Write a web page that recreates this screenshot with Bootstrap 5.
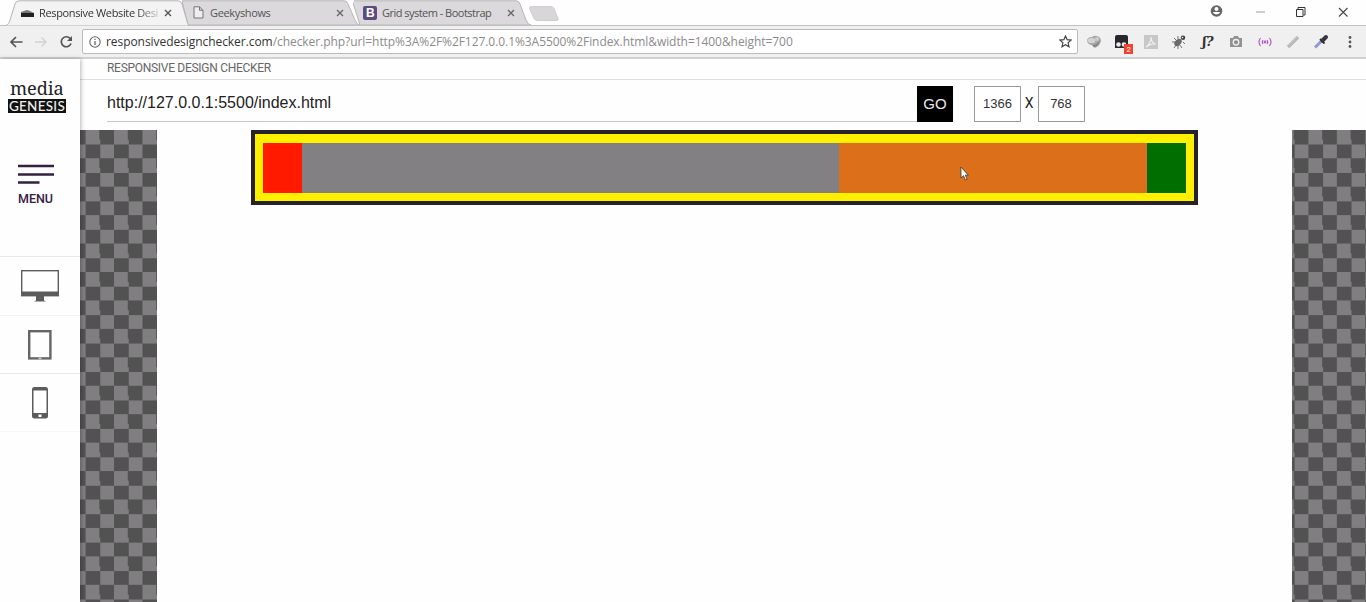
<!DOCTYPE html>
<html lang="en">
<head>
<meta charset="utf-8">
<meta name="viewport" content="width=device-width, initial-scale=1">
<title>Responsive Website Design Checker</title>
<link href="https://cdn.jsdelivr.net/npm/bootstrap@5.3.0/dist/css/bootstrap.min.css" rel="stylesheet">
<style>
body{font-family:"Liberation Sans",Arial,sans-serif;background:#fefefe;color:#222}
svg{display:block;flex:none}
.ui-font{font-family:"Open Sans","Noto Sans",sans-serif}
/* browser frame */
.tabstrip{height:25px;background:#fefefe}
.tab{height:25px;font-size:11px;color:#555;line-height:25px;white-space:nowrap}
.tab .shape{position:absolute;left:0;top:0}
.tab-label,.tab-fav,.tab-x{position:relative}
.tab-label{flex:none}
.tab1{width:184px;margin-left:5px;padding-left:15px;color:#333;z-index:2}
.tab2{width:178px;margin-left:-7px;padding-left:11px;z-index:1}
.tab3{width:178px;margin-left:-7px;padding-left:10px}
.tab1 .tab-label{width:125px;margin-left:4px;-webkit-mask-image:linear-gradient(90deg,#000 78%,rgba(0,0,0,.25) 94%);mask-image:linear-gradient(90deg,#000 78%,rgba(0,0,0,.25) 94%);letter-spacing:-.35px}
.tab2 .tab-label{width:126px;margin-left:6px;letter-spacing:-.35px}
.tab3 .tab-label{width:125px;margin-left:5px;letter-spacing:-.5px}
.tab3 .tab-label{letter-spacing:-.52px}
.newtab{margin-left:-2px;margin-top:6px}
.win{margin-left:auto}
.toolbar{height:34px;background:#f1f0f1;border-top:1px solid #c2c1c2;border-bottom:2px solid #d2d1d2}
.tool-nav{width:82px;padding-left:9px}
.address{width:996px;height:25px;background:#fff;border:1px solid #bcbbbc;border-radius:2px;font-size:12px;color:#8c8a8c;padding:0 5px 0 6px}
.address b{font-weight:400;color:#333}
.address-text{margin-left:5px;letter-spacing:-.06px}
.ext{width:28.4px}
.fx{display:block;font:italic 600 13px/18px "DejaVu Serif","Liberation Serif",serif;color:#333;letter-spacing:-.5px}
/* checker site */
.site{height:543px}
.side{width:80px;background:#fefefe;z-index:2;box-shadow:1px 0 4px rgba(0,0,0,.28)}
.brand{height:83px;padding:20px 0 0 8px}
.brand-top{font-family:"Noto Serif","Liberation Serif",serif;font-size:18.2px;line-height:19px;height:20px;color:#222;width:58px;padding-left:2px;white-space:nowrap;letter-spacing:-.1px}
.brand-bot{width:58px;height:13.500px;background:#111;color:#eee;font-family:Lato,sans-serif;font-size:13.5px;line-height:14px;text-align:center;font-weight:500;letter-spacing:.25px}
.menu{height:114px;padding:22px 0 0 18px;color:#36203f}
.menu span{display:block;font:500 12.5px/16px Roboto,sans-serif;margin-top:6px;letter-spacing:-.05px}
.device{height:58.7px;border-top:1px solid #e9e8ea}
.device:nth-of-type(4){border-top-color:#f3f2f4}
.device:last-child{border-bottom:1px solid #f7f7f8}
.topline{height:21px;border-bottom:1px solid #dedede;padding-left:27px;font:400 12px/19px Roboto,sans-serif;color:#666;letter-spacing:-.29px}
.controls{height:50px;padding:6px 0 0 27px}
.url-field{width:810px;height:36px;border-bottom:1px solid #c9c8c9;font-size:16px;line-height:34px;color:#222}
.go{width:36px;height:36px;background:#000;color:#e8e8e8;font-size:15px;line-height:34px;border-radius:0;padding:0;border:0;margin-right:21px}
.dim{width:47px;height:36px;border:1px solid #9a999a;font-size:13px;line-height:34px;color:#333;background:#fff}
.times{width:16.500px;font:400 14px/35px Roboto,sans-serif}
.stage{padding:0 74px 0 76.5px;background:repeating-conic-gradient(#535253 0 25%,#807e80 0 50%) 5.6px -.2px/28.44px 28.44px}
.viewport-box{background:#fefefe;padding-left:94.5px}
.frame{width:947px;height:75px;border:4px solid #25222a;background:#fff000;padding:8.5px 8px 8px}
.c1,.c4{width:38.7px}.c2{width:537.5px}
.c1{background:#ff1a00}.c2{background:#828082}.c3{background:#dc6f1a}.c4{background:#006e00}
.cursor{position:absolute;left:960px;top:166px;z-index:5}
</style>
</head>
<body class="overflow-hidden position-relative">
<header class="ui-font">
  <div class="tabstrip d-flex align-items-start">
    <div class="tab tab1 d-flex align-items-center position-relative">
      <svg class="shape" width="184" height="26"><path d="M0 26C4 24 4 23 5 20L10 4Q11 .8 14 .8H173Q176 .8 177 4L182 21Q183 25 184 26Z" fill="#f4f3f4" stroke="#b6b5b6"/></svg>
      <svg class="tab-fav" width="15" height="12"><path d="M1 5l3-1 3-1 3 1 4 2v4H1z" fill="#777"/><path d="M1 6h13v4H1z" fill="#222"/></svg>
      <span class="tab-label">Responsive Website Desi</span>
      <svg class="tab-x" width="8" height="8"><path d="M1 1l6 6M7 1L1 7" stroke="#555" stroke-width="1.4"/></svg>
    </div>
    <div class="tab tab2 d-flex align-items-center position-relative">
      <svg class="shape" width="178" height="25"><path d="M0 .8H162Q165 .8 166 4L173 20Q175 25 178 25H6Z" fill="#dbd9db" stroke="#b6b5b6"/></svg>
      <svg class="tab-fav" width="11" height="13"><path d="M1 .8h5.5L10 4.3V12H1zM6.5.8v3.5H10" fill="#eee" stroke="#777"/></svg>
      <span class="tab-label">Geekyshows</span>
      <svg class="tab-x" width="8" height="8"><path d="M1 1l6 6M7 1L1 7" stroke="#666" stroke-width="1.3"/></svg>
    </div>
    <div class="tab tab3 d-flex align-items-center position-relative">
      <svg class="shape" width="178" height="25"><path d="M1 .8H163Q166 .8 167 4L173 20Q175 25 178 25H7L0 3" fill="#dbd9db" stroke="#b6b5b6"/></svg>
      <svg class="tab-fav" width="14" height="14"><rect width="14" height="14" rx="2" fill="#5c4b80"/><text x="3" y="11.2" font-family="Liberation Sans" font-weight="700" font-size="12" fill="#fff" letter-spacing="0">B</text></svg>
      <span class="tab-label">Grid system - Bootstrap</span>
      <svg class="tab-x" width="8" height="8"><path d="M1 1l6 6M7 1L1 7" stroke="#666" stroke-width="1.3"/></svg>
    </div>
    <svg class="newtab" width="31" height="15"><path d="M2 .5h20q2 0 3 2l4 10q1 2-2 2H8q-2 0-3-2L.8 3Q0 .5 2 .5z" fill="#d8d6d8" stroke="#cfcecf"/></svg>
    <svg class="win" width="160" height="25"><circle cx="10.5" cy="11" r="5.8" fill="#666"/><circle cx="10.5" cy="9" r="2" fill="#fff"/><path d="M6.8 12h7.4q-.6 2.4-3.7 2.5-3.1-.1-3.7-2.5z" fill="#fff"/><path d="M50 12h9" stroke="#999"/><path d="M90.500 9.500h6.500v7h-6.500zM92 9V7.500h7V15h-1.500" fill="none" stroke="#333"/><path d="M133 8l8.500 8.500M141.500 8L133 16.500" stroke="#444" stroke-width="1.1"/></svg>
  </div>
  <div class="toolbar d-flex align-items-center">
    <div class="tool-nav d-flex align-items-center">
      <svg width="72" height="16" fill="none"><path d="M13.500 8H2M7 3L2 8l5 5" stroke="#555" stroke-width="1.7"/><path d="M26 8h11M32.500 3.500L37 8l-4.500 4.500" stroke="#d3d2d3" stroke-width="1.4"/><path d="M61.500 5A5 5 0 1 0 62 9.500" stroke="#555" stroke-width="1.7"/><path d="M63 2v5h-5z" fill="#555"/></svg>
    </div>
    <div class="address d-flex align-items-center">
      <svg width="12" height="12"><circle cx="6" cy="6" r="5.200" fill="none" stroke="#666" stroke-width="1.100"/><path d="M6 5v4M6 2.700v1.300" stroke="#666" stroke-width="1.300"/></svg>
      <span class="address-text text-nowrap"><b>responsivedesignchecker.com</b>/checker.php?url=http%3A%2F%2F127.0.0.1%3A5500%2Findex.html&amp;width=1400&amp;height=700</span>
      <svg class="ms-auto" width="13" height="13"><path d="M6.500 1l1.600 3.700 4 .4-3 2.700.9 4-3.500-2.100L3 11.800l.9-4-3-2.700 4-.4z" fill="none" stroke="#444" stroke-width="1.200"/></svg>
    </div>
    <div class="d-flex align-items-center" style="margin-left:2px">
      <div class="ext d-flex justify-content-center"><svg width="16" height="16"><path d="M1 7q0-4 5-4 2-2 5-1 4 1 4 5-1 5-6 7-2-1-3-3-4 0-5-4z" fill="#aaa9aa"/><ellipse cx="5.500" cy="6.500" rx="4" ry="2.600" fill="#d4d3d4"/><circle cx="11" cy="5" r="2" fill="#cccbcc"/><path d="M6 11q5 0 8-5-1 6-6 7z" fill="#858485"/></svg></div>
      <div class="ext d-flex justify-content-center"><svg width="21" height="24"><path d="M3 7q0-2 2-2h9q2 0 2 2v11H3z" fill="#29272c"/><circle cx="6.500" cy="14.500" r="2.300" fill="#eee"/><circle cx="12" cy="14.500" r="2.300" fill="#eee"/><rect x="12" y="14" width="9.500" height="10" fill="#f0432f"/><text x="14.500" y="22" font-size="8" font-family="Liberation Sans" fill="#fff">2</text></svg></div>
      <div class="ext d-flex justify-content-center"><svg width="14" height="14"><rect width="14" height="14" fill="#c8c7c8"/><path d="M2 12q5-4 5-10 0 6 5 7-5-1-10 3z" fill="none" stroke="#eee" stroke-width="1.200"/></svg></div>
      <div class="ext d-flex justify-content-center"><svg width="16" height="16"><path d="M3 4l3 3M7 2v4M12 8l2 2M8 10l3 4M1 8h5M3 14l3-4M7 11v4" stroke="#777"/><ellipse cx="7" cy="8.500" rx="4.200" ry="2.800" transform="rotate(-40 7 8.500)" fill="#6b6a6b"/><circle cx="12" cy="3.800" r="2.300" fill="#444"/><circle cx="11.500" cy="3.500" r=".8" fill="#eee"/></svg></div>
      <div class="ext text-center"><span class="fx">ʃ?</span></div>
      <div class="ext d-flex justify-content-center"><svg width="14" height="13"><path d="M1 3h3l1-2h4l1 2h3v9H1z" fill="#929192"/><circle cx="7" cy="7.300" r="2.800" fill="#929192" stroke="#f1f0f1" stroke-width="1.300"/></svg></div>
      <div class="ext d-flex justify-content-center"><svg width="14" height="12" fill="none" stroke="#b35bc6" stroke-width="1.200"><path d="M2.500 2q-3 4 0 8M5 4q-1.500 2 0 4M9 4q1.500 2 0 4M11.500 2q3 4 0 8"/><circle cx="7" cy="6" r=".8" fill="#b35bc6"/></svg></div>
      <div class="ext d-flex justify-content-center"><svg width="16" height="16"><path d="M3 13L13 3" stroke="#b8b7b8" stroke-width="3.500"/><path d="M3 11.500L12 2.500" stroke="#d6d5d6"/></svg></div>
      <div class="ext d-flex justify-content-center"><svg width="16" height="16"><path d="M2 13.500l7-7" stroke="#8f98d8" stroke-width="3"/><path d="M7 5l4.500 4.500" stroke="#333" stroke-width="2"/><path d="M9.500 6.500L13 3" stroke="#38343f" stroke-width="4" stroke-linecap="round"/></svg></div>
      <div class="ext d-flex justify-content-center"><svg width="4" height="14" fill="#555"><circle cx="2" cy="2.500" r="1.400"/><circle cx="2" cy="7" r="1.400"/><circle cx="2" cy="11.500" r="1.400"/></svg></div>
    </div>
  </div>
</header>
<div class="site d-flex">
  <aside class="side flex-shrink-0">
    <div class="brand">
      <div class="brand-top">media</div>
      <div class="brand-bot">GENESIS</div>
    </div>
    <div class="menu">
      <svg width="36" height="21"><path d="M0 2h36M0 10.500h36M0 18.500h21.500" stroke="#36203f" stroke-width="2.600"/></svg>
      <span>MENU</span>
    </div>
    <div class="device d-flex justify-content-center align-items-center"><svg width="38" height="32"><rect x=".7" y=".7" width="36.600" height="25" fill="#fefefe" stroke="#5d5c5d" stroke-width="1.400"/><path d="M0 21.500h38V26H23v4.500l2 1H13l2-1V26H0z" fill="#5d5c5d"/></svg></div>
    <div class="device d-flex justify-content-center align-items-center"><svg width="24" height="30"><rect x="1.200" y="1.200" width="21.200" height="27.200" fill="none" stroke="#666566" stroke-width="2.400"/><path d="M10.500 28.400h3" stroke="#ccc" stroke-width="1.500"/></svg></div>
    <div class="device d-flex justify-content-center align-items-center"><svg width="16" height="32"><rect width="16" height="31.500" rx="2.500" fill="#5d5c5d"/><path d="M1.500 3.500h13v22.500h-13z" fill="#fefefe"/><rect x="6.500" y="27.500" width="3" height="2.500" fill="#fff"/></svg></div>
  </aside>
  <main class="flex-grow-1 d-flex flex-column">
    <div class="topline">RESPONSIVE DESIGN CHECKER</div>
    <div class="controls d-flex align-items-start">
      <div class="url-field">http://127.0.0.1:5500/index.html</div>
      <button class="go btn">GO</button>
      <div class="dim text-center">1366</div>
      <span class="times text-center">X</span>
      <div class="dim text-center">768</div>
    </div>
    <div class="stage flex-grow-1 d-flex">
      <div class="viewport-box flex-grow-1">
        <div class="frame d-flex">
          <div class="c1"></div><div class="c2"></div><div class="c3 flex-grow-1"></div><div class="c4"></div>
        </div>
      </div>
    </div>
  </main>
</div>
<svg class="cursor" width="9" height="15"><path d="M1 1v11l2.500-2.300L5.300 14l1.800-.8-1.800-4h3z" fill="#fff" stroke="#333" stroke-width=".8"/></svg>
<script src="https://cdn.jsdelivr.net/npm/bootstrap@5.3.0/dist/js/bootstrap.bundle.min.js"></script>
</body>
</html>
